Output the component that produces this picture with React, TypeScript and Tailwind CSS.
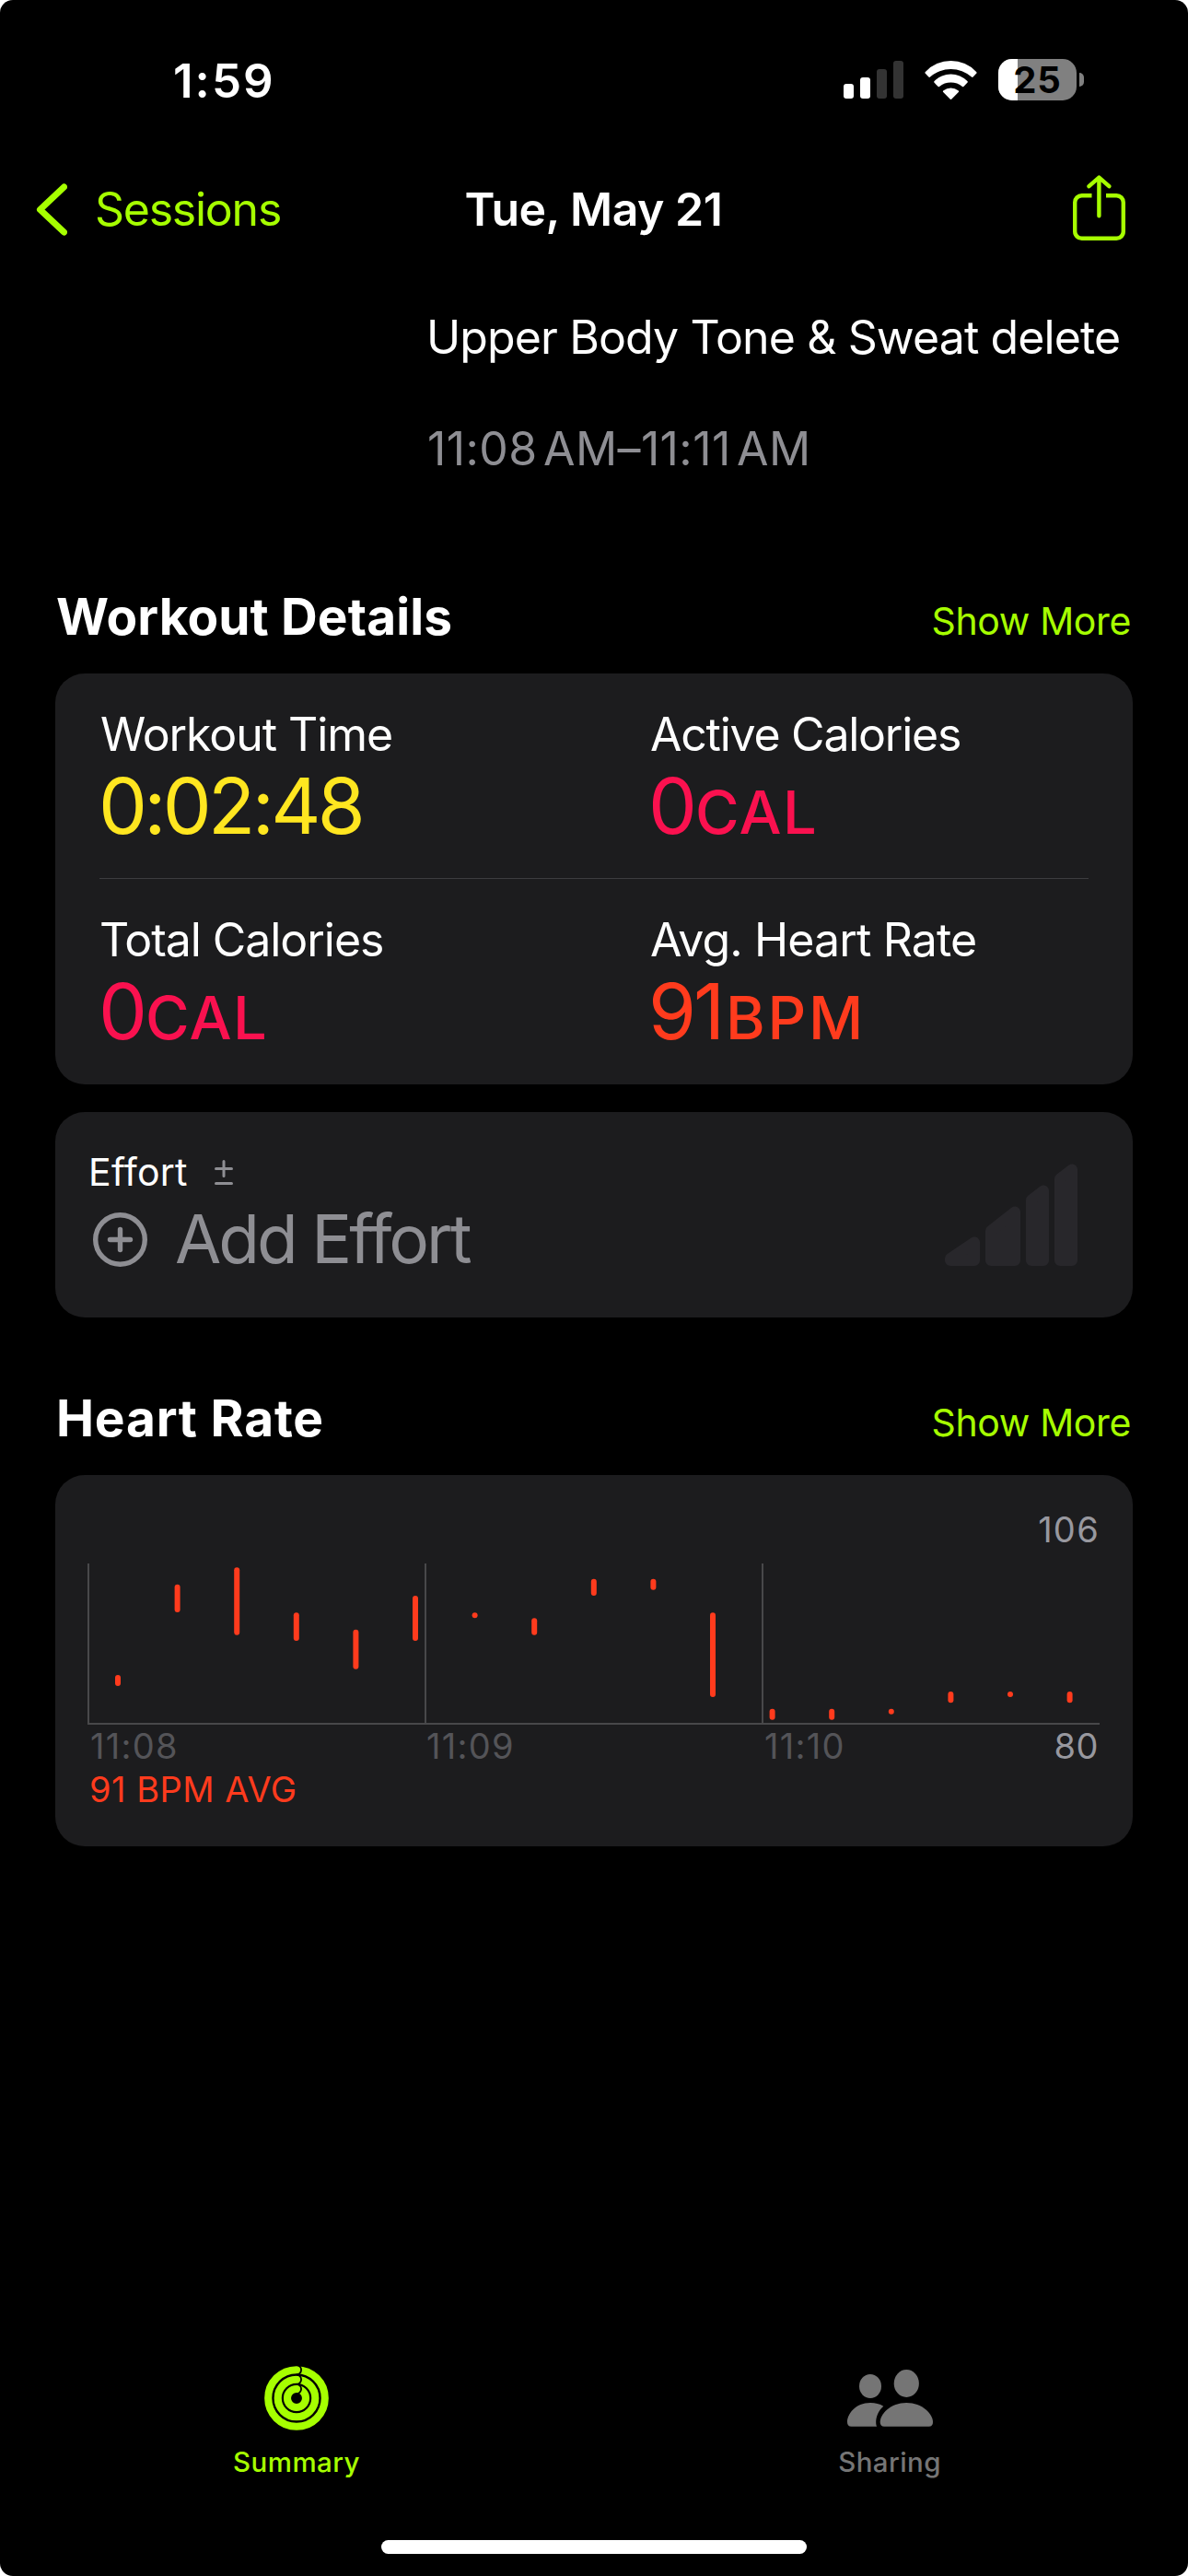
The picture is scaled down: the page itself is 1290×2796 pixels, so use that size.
import React from "react";
import type { ReactNode } from "react";

// Vertical range of every heart rate sample, in chart pixels
const heartRateBars = [
  { top: 121, bottom: 133 },
  { top: 22.7, bottom: 53 },
  { top: 4.2, bottom: 77.7 },
  { top: 53.3, bottom: 84 },
  { top: 71.7, bottom: 114.7 },
  { top: 35, bottom: 84 },
  { top: 53.3, bottom: 59.3 },
  { top: 59.3, bottom: 77.7 },
  { top: 16.7, bottom: 35 },
  { top: 16.7, bottom: 28.7 },
  { top: 53.3, bottom: 145 },
  { top: 157.7, bottom: 169.7 },
  { top: 157.7, bottom: 169.7 },
  { top: 157.7, bottom: 163.7 },
  { top: 139, bottom: 151.3 },
  { top: 139, bottom: 145 },
  { top: 139, bottom: 151.3 },
];

const SignalIcon = () => (
  <svg width="65" height="41" viewBox="0 0 65 41" fill="#ffffff">
    <rect x="0" y="25" width="11" height="16" rx="3" />
    <rect x="18" y="18" width="11" height="23" rx="3" />
    <rect x="36" y="9" width="11" height="32" rx="3" fill="#333333" />
    <rect x="54" y="0" width="11" height="41" rx="3" fill="#333333" />
  </svg>
);

const WifiIcon = () => (
  <svg width="57" height="42" viewBox="0 0 57 42" fill="#ffffff">
    <path d="M.6 13.6Q0 12.7.9 11.9A38 38 0 0 1 56.1 11.9Q57 12.7 56.4 13.6L52.6 17.6Q51.8 18.3 51 17.6A33.7 33.7 0 0 0 6 17.6Q5.2 18.3 4.4 17.6Z" />
    <path d="M10.4 23.6Q9.8 22.8 10.6 22A25 25 0 0 1 46.4 22Q47.2 22.8 46.6 23.6L42.6 27.8Q41.8 28.6 41 27.9A20.4 20.4 0 0 0 16 27.9Q15.2 28.6 14.4 27.8Z" />
    <path d="M20.2 34Q19.4 33 20.5 32.2A13.5 13.5 0 0 1 36.5 32.2Q37.6 33 36.8 34L29.4 41.5Q28.5 42.3 27.6 41.5Z" />
  </svg>
);

const BatteryIcon = () => (
  <div className="flex items-center gap-[3px]">
    <div className="relative h-[45px] w-[85px] rounded-[15px] bg-[#808080]">
      <div className="h-full w-[21px] rounded-l-[15px] bg-white" />
      <span className="absolute inset-x-0 -top-0.5 text-center text-[40px] leading-[49px] font-bold tracking-[0.02em] text-black">
        25
      </span>
    </div>
    <div className="h-[15px] w-[5px] rounded-r-full bg-[#808080]" />
  </div>
);

const ShareIcon = () => (
  <svg
    width="57"
    height="71"
    viewBox="0 0 57 71"
    fill="none"
    stroke="#a6ff00"
    strokeWidth="4.4"
  >
    <path d="M20.5 22.2H9.7A7.5 7.5 0 0 0 2.2 29.7V61.3A7.5 7.5 0 0 0 9.7 68.8H47.3A7.5 7.5 0 0 0 54.8 61.3V29.7A7.5 7.5 0 0 0 47.3 22.2H36" />
    <path
      d="M28.4 3.2V44.2M17.5 12.2L28.4 2.6L39.3 12.2"
      strokeLinecap="round"
      strokeLinejoin="round"
    />
  </svg>
);

const EffortBarsIcon = () => (
  <svg
    width="144"
    height="111"
    viewBox="0 0 144 111"
    fill="#28272b"
    stroke="#28272b"
    strokeWidth="12"
    strokeLinejoin="round"
  >
    <path d="M6 103L32 85.5V105H6Z" />
    <path d="M50 73L76 52.5V105H50Z" />
    <path d="M94 39.5L107 29.5V105H94Z" />
    <path d="M125 16.5L138 6.5V105H125Z" />
  </svg>
);

const RingsIcon = () => (
  <svg width="70" height="70" viewBox="0 0 70 70" fill="none">
    <g stroke="#a6ff00" strokeWidth="8.1">
      <circle cx="35" cy="35" r="30.8" />
      <circle cx="35" cy="35" r="20.3" />
      <circle cx="35" cy="35" r="10" />
    </g>
    <g stroke="#000000" strokeWidth="1.8">
      <path d="M35-.9A5 5 0 0 1 35 9.3" />
      <path d="M35 9.6A5 5 0 0 1 35 19.8" />
      <path d="M35 19.9A5 5 0 0 1 35 30.1" />
    </g>
  </svg>
);

const PeopleIcon = () => (
  <svg width="93" height="70" viewBox="0 0 93 70" fill="#757575">
    <ellipse cx="25" cy="22" rx="12" ry="13" />
    <ellipse cx="64.3" cy="19" rx="13.6" ry="15" />
    <path d="M35.7 61C35.7 52 47 40 64.3 40C81.6 40 93 52 93 61C93 64 91.5 65.7 88.5 65.7H40.2C37.2 65.7 35.7 64 35.7 61Z" />
    <path d="M0 61C0 52 9 40 25 40C30.5 40 35.5 41.3 39.3 43.7C33.5 48.5 31.2 55.5 31.2 61C31.2 63 31.5 64.7 32 65.7H4.5C1.5 65.7 0 64 0 61Z" />
  </svg>
);

type SectionHeaderProps = {
  title: string;
  titleClass: string;
};

const SectionHeader = ({ title, titleClass }: SectionHeaderProps) => (
  <div className="mb-8 flex items-baseline justify-between pr-0.5 pl-px">
    <h2 className={`text-[55px] leading-[60px] font-bold ${titleClass}`}>
      {title}
    </h2>
    <a className="text-[41px] leading-10 tracking-[-0.009em] text-[#a6ff00]">
      Show More
    </a>
  </div>
);

type MetricProps = {
  label: string;
  labelClass: string;
  valueClass: string;
  value: string;
  unit?: ReactNode;
};

const Metric = ({ label, labelClass, valueClass, value, unit }: MetricProps) => (
  <div>
    <div className={`pl-px text-[50px] leading-[60px] ${labelClass}`}>
      {label}
    </div>
    <div
      className={`mt-1.5 -ml-px h-[84px] text-[84px] leading-[84px] whitespace-nowrap ${valueClass}`}
    >
      {value}
      {unit}
    </div>
  </div>
);

const CalorieUnit = () => (
  <span className="-ml-0.5 text-[65px] leading-none font-medium tracking-[0.02em]">
    CAL
  </span>
);

const App = () => {
  return (
    <div className="h-[2796px] w-[1290px] bg-white">
      <div className="flex h-full flex-col overflow-hidden rounded-[14px] bg-black font-['Inter','Liberation_Sans',sans-serif] text-white">
        {/* Status bar */}
        <div className="flex h-[173px] items-center justify-between pr-[113px] pl-[188px]">
          <span className="pt-0.5 text-[51px] leading-[60px] font-semibold tracking-[0.04em]">
            1:59
          </span>
          <div className="flex items-center gap-[23px]">
            <SignalIcon />
            <WifiIcon />
            <BatteryIcon />
          </div>
        </div>

        {/* Navigation bar */}
        <nav className="grid h-[108px] grid-cols-[1fr_auto_1fr] items-center pr-[68px] pl-[39px] text-[50px] leading-[60px]">
          <a className="flex items-center gap-[30px] tracking-[-0.025em] text-[#a6ff00]">
            <svg
              width="34"
              height="57"
              viewBox="0 0 34 57"
              fill="none"
              stroke="#a6ff00"
              strokeWidth="7"
              strokeLinecap="round"
              strokeLinejoin="round"
            >
              <path d="M30.5 4L4.5 28.5L30.5 53" />
            </svg>
            Sessions
          </a>
          <h1 className="pl-7 font-semibold tracking-[-0.01em]">Tue, May 21</h1>
          <div className="-mt-[3px] flex justify-end">
            <ShareIcon />
          </div>
        </nav>

        {/* Workout summary */}
        <div className="flex flex-col gap-[61px] pt-[55px] pl-[463px] text-[50px] leading-[60px] whitespace-nowrap">
          <p className="tracking-[-0.0177em]">Upper Body Tone &amp; Sweat delete</p>
          <p className="pl-px tracking-[0.008em] text-[#8e8e93] [word-spacing:-8px]">
            11:08 AM–11:11 AM
          </p>
        </div>

        <main className="px-[60px]">
          <section className="pt-[122px]">
            <SectionHeader
              title="Workout Details"
              titleClass="tracking-[0.002em]"
            />
            <div className="rounded-[32px] bg-[#1c1c1e] px-12 pt-9 pb-[37px]">
              <div className="grid grid-cols-[597px_1fr] pb-9">
                <Metric
                  label="Workout Time"
                  labelClass="tracking-[-0.0214em]"
                  value="0:02:48"
                  valueClass="tracking-[-0.044em] text-[#ffe620]"
                />
                <Metric
                  label="Active Calories"
                  labelClass="tracking-[-0.025em]"
                  value="0"
                  valueClass="text-[#fa114f]"
                  unit={<CalorieUnit />}
                />
              </div>
              <div className="h-px bg-[#3d3d40]" />
              <div className="grid grid-cols-[597px_1fr] pt-9">
                <Metric
                  label="Total Calories"
                  labelClass="-ml-px tracking-[-0.0212em]"
                  value="0"
                  valueClass="text-[#fa114f]"
                  unit={<CalorieUnit />}
                />
                <Metric
                  label="Avg. Heart Rate"
                  labelClass="tracking-[-0.0173em]"
                  value="91"
                  valueClass="tracking-[-0.037em] text-[#ff3b1d]"
                  unit={
                    <span className="ml-1 text-[65px] leading-none font-medium tracking-[0.043em]">
                      BPM
                    </span>
                  }
                />
              </div>
            </div>
          </section>

          <section className="mt-[30px] flex h-[223px] items-start justify-between rounded-[32px] bg-[#1c1c1e] pr-[60px] pl-9">
            <div className="pt-[45px]">
              <div className="flex items-center text-[41px] leading-10 tracking-[0.006em]">
                Effort
                <svg
                  className="ml-[29px]"
                  width="20"
                  height="27"
                  viewBox="0 0 20 27"
                  stroke="#8e8e93"
                  strokeWidth="3"
                  strokeLinecap="round"
                >
                  <path d="M10 1.5V17.5M1.5 9.5H18.5M1.5 25.5H18.5" />
                </svg>
              </div>
              <div className="mt-[13px] flex items-center pl-[5px] text-[73px] leading-[80px] tracking-[-0.041em] text-[#8e8e93]">
                <svg
                  className="mr-[30px]"
                  width="59"
                  height="59"
                  viewBox="0 0 59 59"
                  fill="none"
                  stroke="#8e8e93"
                  strokeWidth="5.4"
                  strokeLinecap="round"
                >
                  <circle cx="29.5" cy="29.5" r="26.8" />
                  <path d="M29.5 18.5V40.5M18.5 29.5H40.5" />
                </svg>
                Add Effort
              </div>
            </div>
            <div className="pt-14">
              <EffortBarsIcon />
            </div>
          </section>

          <section className="pt-[79px]">
            <SectionHeader title="Heart Rate" titleClass="tracking-[0.014em]" />
            <div className="rounded-[32px] bg-[#1c1c1e] px-9 pt-[34px] pb-[38px] text-[38px]">
              <div className="text-right leading-[50px] tracking-[0.034em] text-[#98989f]">
                106
              </div>
              <svg
                className="mt-3 block overflow-visible"
                width="1098"
                height="176"
                viewBox="0 0 1098 176"
              >
                <g fill="#48484a">
                  <rect x="-1" y="0" width="2" height="174" />
                  <rect x="365" y="0" width="2" height="174" />
                  <rect x="731" y="0" width="2" height="174" />
                  <rect x="-1" y="173" width="1099" height="2" />
                </g>
                {heartRateBars.map(({ top, bottom }, i) => (
                  <rect
                    key={i}
                    x={29 + i * 64.6}
                    y={top}
                    width="6"
                    height={bottom - top}
                    rx="3"
                    fill="#ff3b1d"
                  />
                ))}
              </svg>
              <div className="flex leading-[45px] text-[#545458]">
                <span className="w-[366px] pl-0.5 tracking-[0.034em]">11:08</span>
                <span className="w-[366px] pl-px tracking-[0.034em]">11:09</span>
                <span className="pl-0.5 tracking-[0.034em]">11:10</span>
                <span className="ml-auto pr-px tracking-[0.013em] text-[#98989f]">
                  80
                </span>
              </div>
              <div className="pl-px leading-[48px] tracking-[0.013em] text-[#ff3b1d]">
                91 BPM AVG
              </div>
            </div>
          </section>
        </main>

        {/* Tab bar */}
        <div className="mt-auto grid grid-cols-2 pr-0.5 text-[29.5px] leading-10 font-medium">
          <div className="flex flex-col items-center gap-3.5 tracking-[0.015em] text-[#a6ff00]">
            <RingsIcon />
            Summary
          </div>
          <div className="flex flex-col items-center gap-3.5 tracking-[0.014em] text-[#757575]">
            <PeopleIcon />
            Sharing
          </div>
        </div>
        <div className="mx-auto mt-[65px] mb-6 h-[15px] w-[462px] rounded-full bg-white" />
      </div>
    </div>
  );
};

export default App;
